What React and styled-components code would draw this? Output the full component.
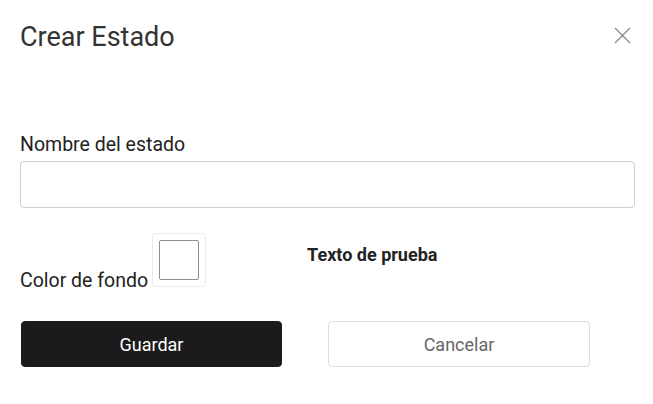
import React from "react";
import styled, { createGlobalStyle } from "styled-components";

const Global = createGlobalStyle`
  html, body { margin: 0; padding: 0; background: #fff; }
  body { font-family: Roboto, "Liberation Sans", Arial, sans-serif; }
  * { box-sizing: border-box; }
`;

const Dialog = styled.div`
  width: 653px;
  height: 404px;
  padding: 22px 18px 0 20px;
  background: #fff;
`;

const Header = styled.div`
  display: flex;
  align-items: center;
  justify-content: space-between;
  height: 30px;
`;

const Title = styled.h2`
  margin: 0;
  font-size: 27px;
  line-height: 30px;
  font-weight: 400;
  color: #333;
`;

const CloseButton = styled.button`
  border: 0;
  background: none;
  padding: 0;
  width: 17px;
  height: 17px;
  margin-right: 4px;
  margin-top: -3px;
  display: flex;
  align-items: center;
  justify-content: center;
  cursor: pointer;
`;

const Form = styled.form`
  display: flex;
  flex-direction: column;
  margin-top: 81px;
`;

const Label = styled.label`
  font-size: 19.5px;
  line-height: 23px;
  color: #222;
  margin-bottom: 5px;
`;

const TextInput = styled.input`
  height: 47px;
  width: 100%;
  border: 1px solid #cfcfcf;
  border-radius: 4px;
  padding: 0 12px;
  font-size: 18px;
  font-family: inherit;
  outline: none;
`;

const ColorRow = styled.div`
  display: flex;
  align-items: flex-start;
  margin-top: 25px;
`;

const ColorLabel = styled.label`
  font-size: 19.5px;
  line-height: 23px;
  color: #222;
`;

const Swatch = styled.span`
  display: inline-block;
  width: 54px;
  height: 54px;
  margin-left: 4px;
  padding: 6px;
  border: 1px solid #ececec;
  border-radius: 4px;
  vertical-align: baseline;
`;

const SwatchFill = styled.span`
  display: block;
  width: 40px;
  height: 40px;
  border: 1px solid #8f8f8f;
  border-radius: 2px;
  background: ${(p) => p.$color};
`;

const Preview = styled.div`
  margin-left: 101px;
  margin-top: 11px;
  font-size: 18px;
  line-height: 21px;
  font-weight: 700;
  color: #222;
`;

const Actions = styled.div`
  display: grid;
  grid-template-columns: 307px 1fr;
  margin-top: 29px;
`;

const Button = styled.button`
  width: ${(p) => (p.$primary ? "261px" : "262px")};
  height: 46px;
  margin-left: 1px;
  border-radius: 4px;
  font-family: inherit;
  font-size: 18px;
  cursor: pointer;
  border: 1px solid ${(p) => (p.$primary ? "#1b1b1d" : "#dcdce2")};
  background: ${(p) => (p.$primary ? "#1b1b1d" : "#fff")};
  color: ${(p) => (p.$primary ? "#fff" : "#666")};
`;

export default function App() {
  return (
    <>
      <Global />
      <Dialog>
        <Header>
          <Title>Crear Estado</Title>
          <CloseButton type="button" aria-label="Cerrar">
            <svg width="17" height="17" viewBox="0 0 17 17">
              <path d="M1 1L16 16M16 1L1 16" stroke="#8c8c8c" strokeWidth="1.4" />
            </svg>
          </CloseButton>
        </Header>
        <Form onSubmit={(e) => e.preventDefault()}>
          <Label>Nombre del estado</Label>
          <TextInput type="text" />
          <ColorRow>
            <ColorLabel>
              Color de fondo
              <Swatch>
                <SwatchFill $color="#ffffff" />
              </Swatch>
            </ColorLabel>
            <Preview>Texto de prueba</Preview>
          </ColorRow>
          <Actions>
            <Button type="submit" $primary>Guardar</Button>
            <Button type="button">Cancelar</Button>
          </Actions>
        </Form>
      </Dialog>
    </>
  );
}
